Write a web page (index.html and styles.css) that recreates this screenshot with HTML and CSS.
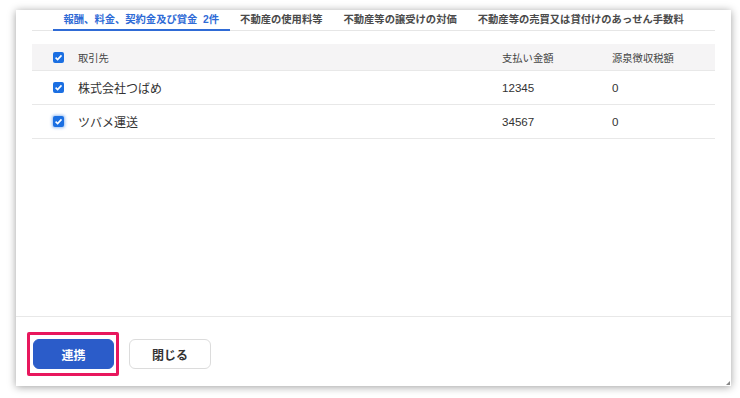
FILE: index.html
```html
<!doctype html>
<html lang="ja">
<head>
  <meta charset="utf-8">
  <link rel="stylesheet" href="styles.css">
</head>
<body>
  <div class="dialog">
    <div class="content">
      <nav class="tabs">
        <span class="tab active">報酬、料金、契約金及び賞金&nbsp;&nbsp;2件</span>
        <span class="tab">不動産の使用料等</span>
        <span class="tab">不動産等の譲受けの対価</span>
        <span class="tab">不動産等の売買又は貸付けのあっせん手数料</span>
      </nav>

      <div class="list">
        <div class="row head">
          <span class="check"><svg viewBox="0 0 11 11"><path d="M2.6 5.7 L4.6 7.6 L8.5 3.4" /></svg></span>
          <span>取引先</span>
          <span>支払い金額</span>
          <span>源泉徴収税額</span>
        </div>
        <div class="row">
          <span class="check"><svg viewBox="0 0 11 11"><path d="M2.6 5.7 L4.6 7.6 L8.5 3.4" /></svg></span>
          <span>株式会社つばめ</span>
          <span class="num">12345</span>
          <span class="num">0</span>
        </div>
        <div class="row">
          <span class="check focus"><svg viewBox="0 0 11 11"><path d="M2.6 5.7 L4.6 7.6 L8.5 3.4" /></svg></span>
          <span>ツバメ運送</span>
          <span class="num">34567</span>
          <span class="num">0</span>
        </div>
      </div>
    </div>

    <footer class="actions">
      <span class="highlight"><button class="btn primary">連携</button></span>
      <button class="btn">閉じる</button>
    </footer>
    <span class="grip"></span>
  </div>
</body>
</html>
```

FILE: styles.css
```css
html, body {
  margin: 0;
  background: #fff;
}
body {
  padding: 10px 9px 12px 16px;
  font-family: "Liberation Sans", "Noto Sans CJK JP", sans-serif;
  color: #333;
}
.dialog {
  position: relative;
  width: 715px;
  height: 376px;
  display: flex;
  flex-direction: column;
  background: #fff;
  box-shadow: 0 1px 8px rgba(0, 0, 0, 0.38);
}
.content {
  flex: 1;
  padding: 0 16px;
}
.tabs {
  display: flex;
  padding-left: 21px;
  border-bottom: 1px solid #e6e6e6;
}
.tab {
  padding: 3px 10.5px;
  line-height: 13px;
  font-size: 10.3px;
  font-weight: bold;
  color: #4a4a4a;
  border-bottom: 2px solid transparent;
  margin-bottom: -1px;
  white-space: nowrap;
}
.tab.active {
  color: #2f6bd6;
  border-bottom-color: #2f6bd6;
}
.list {
  margin-top: 13px;
}
.row {
  display: grid;
  grid-template-columns: 25px 424px 110px 103px;
  align-items: center;
  padding-left: 21px;
  height: 33px;
  border-bottom: 1px solid #e8e8e8;
  font-size: 12px;
  color: #333;
}
.row.head {
  height: 26px;
  background: #f5f4f5;
  font-size: 10.3px;
  color: #444;
}
.num {
  font-size: 11.6px;
}
.check {
  width: 11px;
  height: 11px;
  border-radius: 2px;
  background: #1b6fe2;
  display: flex;
}
.check svg {
  width: 11px;
  height: 11px;
  fill: none;
  stroke: #fff;
  stroke-width: 1.6;
}
.check.focus {
  box-shadow: 0 0 3px 1px rgba(27, 111, 226, 0.45);
}
.actions {
  display: flex;
  align-items: center;
  gap: 10px;
  padding: 15px 11px 10px;
  border-top: 1px solid #e8e8e8;
}
.highlight {
  display: flex;
  padding: 4px 2px 4px 3px;
  border: 3px solid #e8175d;
  border-radius: 2px;
}
.btn {
  width: 82px;
  height: 30px;
  border-radius: 6px;
  border: 1px solid #dcdcdc;
  background: #fff;
  color: #333;
  font-family: inherit;
  font-size: 12px;
  font-weight: bold;
  padding: 0;
}
.btn.primary {
  width: 81px;
  background: #2b5cc9;
  border-color: #2b5cc9;
  color: #fff;
}
.grip {
  position: absolute;
  right: 1px;
  bottom: 1px;
  width: 0;
  height: 0;
  border-left: 4px solid transparent;
  border-bottom: 4px solid #888;
}
```
